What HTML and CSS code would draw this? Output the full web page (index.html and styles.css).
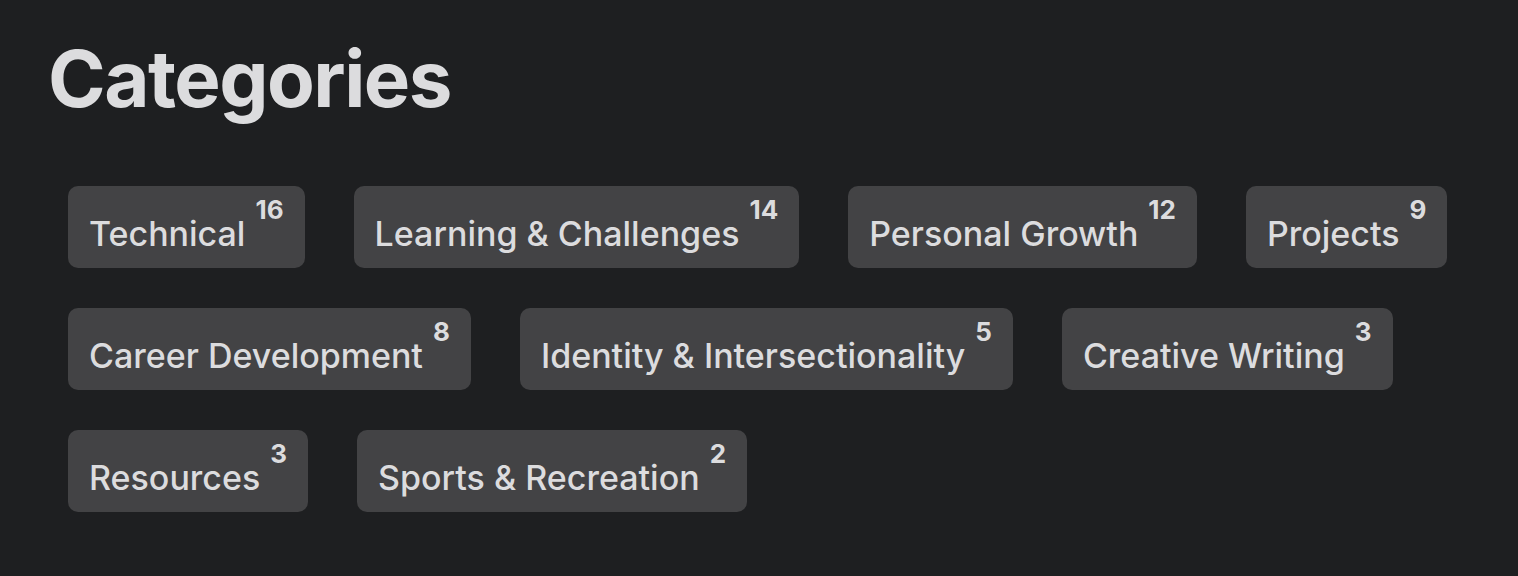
FILE: index.html
```html
<!DOCTYPE html>
<html lang="en">
<head>
    <meta charset="UTF-8">
    <meta name="viewport" content="width=device-width, initial-scale=1.0">
    <title>Categories</title>
    <link rel="stylesheet" href="styles.css">
</head>
<body>

    <!-- Categories list -->
    <div class="page">
        <h1>Categories</h1>

        <div class="tags">
            <a class="tag" href="#"><span class="name">Technical</span><span class="count">16</span></a>
            <a class="tag" href="#"><span class="name">Learning &amp; Challenges</span><span class="count">14</span></a>
            <a class="tag" href="#"><span class="name">Personal Growth</span><span class="count">12</span></a>
            <a class="tag" href="#"><span class="name">Projects</span><span class="count">9</span></a>
            <a class="tag" href="#"><span class="name">Career Development</span><span class="count">8</span></a>
            <a class="tag" href="#"><span class="name">Identity &amp; Intersectionality</span><span class="count">5</span></a>
            <a class="tag" href="#"><span class="name">Creative Writing</span><span class="count">3</span></a>
            <a class="tag" href="#"><span class="name">Resources</span><span class="count">3</span></a>
            <a class="tag" href="#"><span class="name">Sports &amp; Recreation</span><span class="count">2</span></a>
        </div>
    </div>

</body>
</html>
```

FILE: styles.css
```css
* {
    margin: 0;
    padding: 0;
    box-sizing: border-box;
    font-family: Inter, "Noto Sans", sans-serif;
}
body {
    background-color: #1e1f21;
    color: #dcdcde;
}
.page {
    padding: 40px 48px 0;
}
h1 {
    font-size: 78px;
    line-height: 78px;
    font-weight: 700;
    letter-spacing: -1.5px;
    margin-bottom: 68px;
}
.tags {
    display: flex;
    flex-wrap: wrap;
    column-gap: 49px;
    row-gap: 40px;
    padding-left: 20px;
}
.tag {
    display: flex;
    align-items: flex-start;
    gap: 10px;
    height: 82px;
    padding: 0 21px;
    background-color: #434345;
    border-radius: 10px;
    color: #dcdcde;
    text-decoration: none;
}
.tag .name {
    font-size: 34px;
    line-height: 34px;
    font-weight: 500;
    padding-top: 31px;
}
.tag .count {
    font-size: 26px;
    line-height: 26px;
    font-weight: 700;
    padding-top: 11px;
}
```
